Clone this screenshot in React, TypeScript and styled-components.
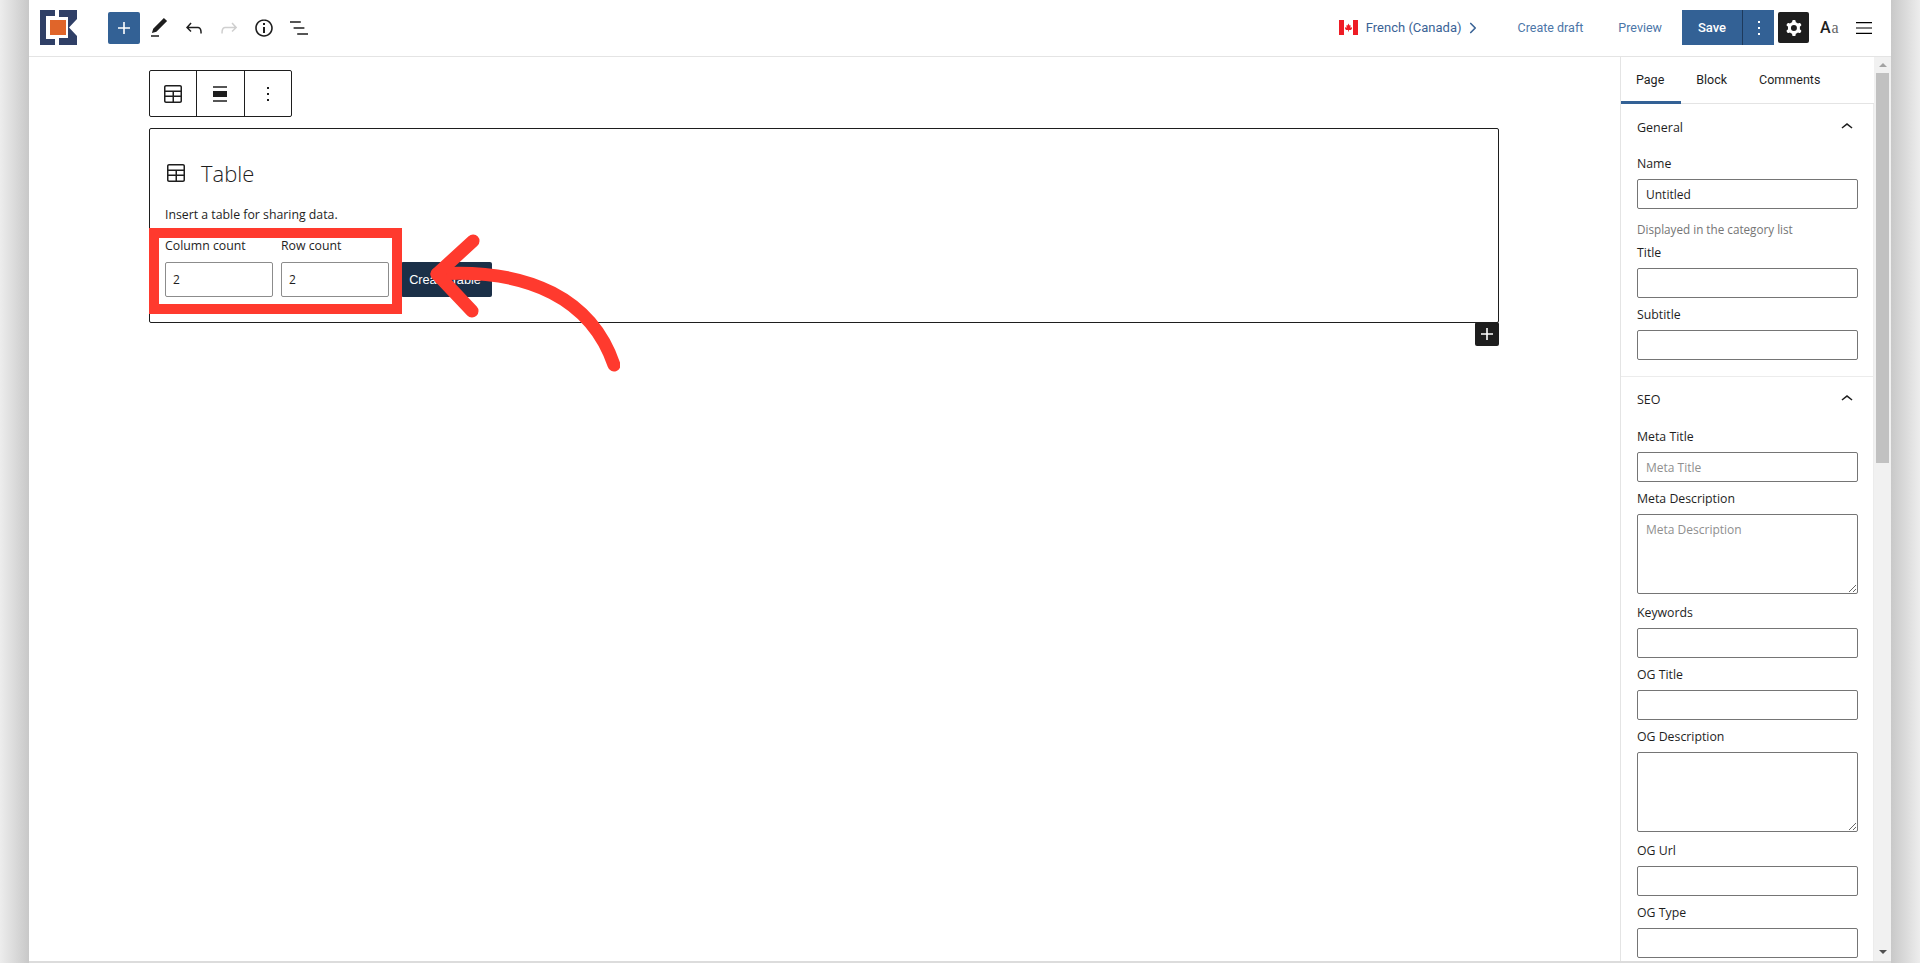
import styled, { createGlobalStyle } from "styled-components";
import { ChevronRight } from "lucide-react";

const GlobalStyle = createGlobalStyle`
  html, body {
    margin: 0;
    padding: 0;
    height: 963px;
    overflow: hidden;
    background: #fff;
  }
  * {
    box-sizing: border-box;
  }
`;

const LABEL_FONT = `"Open Sans", "Noto Sans", sans-serif`;
const UI_FONT = `Roboto, "Liberation Sans", sans-serif`;

const Icon = ({ d, size = 24 }: { d: string; size?: number }) => (
  <svg width={size} height={size} viewBox="0 0 24 24" fill="currentColor" fillRule="evenodd">
    <path d={d} />
  </svg>
);

const PATHS = {
  plus: "M18 11.2h-5.2V6h-1.6v5.2H6v1.6h5.2V18h1.6v-5.2H18z",
  pen: "M20.1 5.1L16.9 2 6.2 12.7l-1.3 4.4 4.5-1.3L20.1 5.1zM4 20.8h8v-1.5H4v1.5z",
  undo: "M18.3 11.7c-.6-.6-1.4-.9-2.3-.9H6.7l2.9-3.3-1.1-1-4.5 5L8.5 16l1-1-2.7-2.7H16c.5 0 .9.2 1.3.5 1 1 1 3.4 1 4.5v.3h1.5v-.2c0-1.5 0-4.3-1.5-5.700z",
  redo: "M15.6 6.5l-1.1 1 2.9 3.3H8c-.9 0-1.7.3-2.3.9-1.4 1.5-1.4 4.2-1.4 5.6v.2h1.5v-.3c0-1.1 0-3.5 1-4.5.3-.3.7-.5 1.3-.5h9.2L14.5 15l1.1 1.1 4.6-4.6-4.6-5z",
  info: "M12 3.2c-4.8 0-8.8 3.9-8.8 8.8 0 4.8 3.9 8.8 8.8 8.8 4.8 0 8.8-3.9 8.8-8.8 0-4.8-4-8.8-8.8-8.8zm0 16c-4 0-7.2-3.3-7.2-7.2C4.8 8 8 4.8 12 4.8s7.2 3.3 7.2 7.2c0 4-3.2 7.2-7.2 7.2zM11 17h2v-6h-2v6zm0-8h2V7h-2v2z",
  list: "M13.8 5.2H3v1.5h10.8V5.2zm-3.6 12v1.5H21v-1.5H10.2zm7.2-6H6.6v1.5h10.8v-1.5z",
  kebab: "M13 19h-2v-2h2v2zm0-6h-2v-2h2v2zm0-6h-2V5h2v2z",
  table:
    "M19 3H5c-1.1 0-2 .9-2 2v14c0 1.1.9 2 2 2h14c1.1 0 2-.9 2-2V5c0-1.1-.9-2-2-2zM5 4.5h14c.3 0 .5.2.5.5v3.5h-15V5c0-.3.2-.5.5-.5zm8 5.5h6.5v3.5H13V10zm-1.5 3.5h-7V10h7v3.5zm-7 5.5v-4h7v4.5H5c-.3 0-.5-.2-.5-.5zm14.5.5h-6V15h6.5v4c0 .3-.2.5-.5.5z",
  align: "M5 15h14V9H5v6zm0 4.8h14v-1.5H5v1.5zM5 4.2v1.5h14V4.2H5z",
  cog: "M10.289 4.836A1 1 0 0111.275 4h1.306a1 1 0 01.987.836l.244 1.466c.787.26 1.503.679 2.108 1.218l1.393-.522a1 1 0 011.216.437l.653 1.13a1 1 0 01-.23 1.273l-1.148.944a6.025 6.025 0 010 2.435l1.149.946a1 1 0 01.23 1.272l-.653 1.13a1 1 0 01-1.216.437l-1.394-.522c-.605.54-1.32.958-2.108 1.218l-.244 1.466a1 1 0 01-.987.836h-1.306a1 1 0 01-.986-.836l-.244-1.466a5.995 5.995 0 01-2.108-1.218l-1.394.522a1 1 0 01-1.217-.436l-.653-1.131a1 1 0 01.23-1.272l1.149-.946a6.026 6.026 0 010-2.435l-1.148-.944a1 1 0 01-.23-1.272l.653-1.131a1 1 0 011.217-.437l1.393.522a5.994 5.994 0 012.108-1.218l.244-1.466zM14.929 12a3 3 0 11-6 0 3 3 0 016 0z",
  menu: "M4 6h16v1.2H4V6zm0 5.400h16v1.200H4v-1.200zM4 16.800h16V18H4v-1.200z",
  up: "M6.5 12.4L12 8l5.5 4.4-.9 1.2L12 10l-4.6 3.6-.9-1.2z",
};

const Logo = () => (
  <svg width="37" height="35" viewBox="0 0 37 35">
    <path d="M0 0H15V6H6V29H15V35H0Z" fill="#2f3f66" />
    <path d="M19 0H37V9L29 17.500L37 26V35H19Z" fill="#2f3f66" />
    <rect x="7" y="7" width="21" height="21" fill="#fff" />
    <rect x="10" y="10" width="16" height="15" fill="#e0652a" />
  </svg>
);

const Flag = () => (
  <svg width="19" height="15" viewBox="0 0 19 15">
    <rect width="19" height="15" fill="#fff" />
    <rect width="5" height="15" fill="#ee1c25" />
    <rect x="14" width="5" height="15" fill="#ee1c25" />
    <path d="M9.500 3.500L10.500 5.500L11.500 5V8L12.800 7L13 8.500L12 10L9.900 10V11.500H9.100V10L7 10L6 8.500L6.200 7L7.500 8V5L8.500 5.500Z" fill="#ee1c25" />
  </svg>
);

const Page = styled.div`
  position: relative;
  width: 1920px;
  height: 963px;
  padding: 0 29px;
  overflow: hidden;
  background: linear-gradient(
    to right,
    #ededed 0,
    #c8c8c8 29px,
    #c8c8c8 1891px,
    #ededed 1920px
  );
`;

const Frame = styled.div`
  display: flex;
  flex-direction: column;
  height: 963px;
  background: #fff;
  border-bottom: 2px solid #dcdcdc;
`;

const TopBar = styled.header`
  display: flex;
  align-items: center;
  justify-content: space-between;
  flex: none;
  height: 57px;
  padding: 0 15px 1px 11px;
  border-bottom: 1px solid #e4e4e4;
`;

const BarGroup = styled.div`
  display: flex;
  align-items: center;
`;

const LogoSlot = styled.div`
  display: flex;
  width: 68px;
`;

const InserterButton = styled.button`
  display: flex;
  align-items: center;
  justify-content: center;
  width: 32px;
  height: 32px;
  margin-right: 1px;
  padding: 0;
  border: none;
  border-radius: 2px;
  background: #336195;
  color: #fff;
`;

const ToolButton = styled.button<{ $muted?: boolean }>`
  display: flex;
  align-items: center;
  justify-content: center;
  width: 35px;
  height: 32px;
  padding: 0;
  border: none;
  background: none;
  color: ${(p) => (p.$muted ? "#cfcfcf" : "#1e1e1e")};
`;

const LanguageLink = styled.a`
  display: flex;
  align-items: center;
  gap: 8px;
  margin-right: 36px;
  font: 400 13px ${UI_FONT};
  color: #3a6396;

  svg:last-child {
    margin-left: -6px;
  }
`;

const BarLink = styled.a`
  margin-right: 35px;
  font: 400 12.5px ${UI_FONT};
  color: #4b76a8;
`;

const PreviewLink = styled(BarLink)`
  margin-right: 20px;
`;

const SaveGroup = styled.div`
  display: flex;
  height: 35px;
  margin-right: 4px;
  background: #336195;
  color: #fff;
`;

const SaveButton = styled.button`
  width: 61px;
  padding: 0;
  border: none;
  border-right: 1px solid #1e3a5c;
  background: none;
  color: inherit;
  font: 500 13px ${UI_FONT};
`;

const SaveMore = styled.button`
  display: flex;
  align-items: center;
  justify-content: center;
  width: 31px;
  padding: 0;
  border: none;
  background: none;
  color: inherit;
`;

const SettingsButton = styled.button`
  display: flex;
  align-items: center;
  justify-content: center;
  width: 31px;
  height: 31px;
  margin-right: 11px;
  padding: 0;
  border: none;
  border-radius: 2px;
  background: #1e1e1e;
  color: #fff;
`;

const FontToggle = styled.span`
  width: 32px;
  font: 400 16px "Liberation Serif", serif;
  color: #666;

  b {
    margin-right: 1px;
    font: 500 16px ${UI_FONT};
    color: #1e1e1e;
  }
`;

const Main = styled.div`
  display: flex;
  flex: 1;
  min-height: 0;
`;

const Canvas = styled.main`
  flex: 1;
  min-width: 0;
  padding: 13px 0 0 120px;
`;

const BlockToolbar = styled.div`
  display: flex;
  width: 143px;
  height: 47px;
  border: 1px solid #1e1e1e;
  border-radius: 2px;
  color: #1e1e1e;
`;

const BlockTool = styled.div`
  display: flex;
  flex: 1;
  align-items: center;
  justify-content: center;

  & + & {
    border-left: 1px solid #1e1e1e;
  }
`;

const TableBlock = styled.section`
  position: relative;
  width: 1350px;
  height: 195px;
  margin-top: 11px;
  padding: 28px 15px 0;
  border: 1px solid #1e1e1e;
  border-radius: 2px;
  color: #1e1e1e;
`;

const BlockHeading = styled.div`
  display: flex;
  align-items: center;
  gap: 13px;
  height: 32px;
  margin-left: -1px;
  font: 300 22px/31px ${LABEL_FONT};
`;

const BlockNote = styled.p`
  margin: 17px 0 0;
  font: 400 12.3px/18px ${LABEL_FONT};
`;

const BlockForm = styled.div`
  display: flex;
  align-items: flex-end;
  margin-top: 13px;
`;

const BlockField = styled.label`
  display: flex;
  flex-direction: column;
  width: 108px;
  margin-right: 8px;
  font: 400 12.3px/18px ${LABEL_FONT};
`;

const CountInput = styled.input`
  width: 108px;
  height: 35px;
  margin-top: 7px;
  padding: 0 7px;
  border: 1px solid #8c8c8c;
  border-radius: 2px;
  font: 400 12px ${LABEL_FONT};
  color: #1e1e1e;
`;

const CreateButton = styled.button`
  width: 91px;
  height: 35px;
  margin-left: 4px;
  padding: 0 3px 0 0;
  border: none;
  border-radius: 2px;
  background: #1b3048;
  color: #fff;
  font: 400 12.7px "Liberation Sans", sans-serif;
`;

const AppenderButton = styled.button`
  position: absolute;
  right: -1px;
  bottom: -24px;
  display: flex;
  align-items: center;
  justify-content: center;
  width: 24px;
  height: 24px;
  padding: 0;
  border: none;
  border-radius: 2px;
  background: #1e1e1e;
  color: #fff;
`;

const Sidebar = styled.aside`
  display: flex;
  flex: none;
  width: 271px;
  border-left: 1px solid #e4e4e4;
`;

const SidebarBody = styled.div`
  flex: 1;
  min-width: 0;
  overflow: hidden;
`;

const Tabs = styled.div`
  display: flex;
  height: 47px;
  border-bottom: 1px solid #e4e4e4;
`;

const Tab = styled.div<{ $active?: boolean }>`
  display: flex;
  align-items: center;
  height: 47px;
  padding: 0 17px 0 15px;
  border-bottom: 3px solid ${(p) => (p.$active ? "#336195" : "transparent")};
  font: 400 12.5px ${UI_FONT};
  color: #1e1e1e;
`;

const Section = styled.section`
  width: 253px;
  padding: 0 16px 16px;
  border: 1px solid #ececec;
  border-width: 0 1px 1px 0;
`;

const SectionHead = styled.div<{ $first?: boolean }>`
  display: flex;
  align-items: center;
  justify-content: space-between;
  height: ${(p) => (p.$first ? "46px" : "44px")};
  margin: 0 -2px ${(p) => (p.$first ? "-3px" : "-1px")} 0;
  font: 400 12.5px ${LABEL_FONT};
  color: #1e1e1e;
`;

const Field = styled.label`
  display: flow-root;
  margin-top: 8px;
  font: 400 12.3px/18px ${LABEL_FONT};
  color: #1e1e1e;
`;

const TextInput = styled.input`
  display: block;
  width: 221px;
  height: 30px;
  margin-top: 6px;
  padding: 0 8px;
  border: 1px solid #757575;
  border-radius: 2px;
  background: #fff;
  font: 400 12px ${LABEL_FONT};
  color: #1e1e1e;

  &::placeholder {
    color: #8f8f8f;
  }
`;

const TextArea = styled.textarea`
  display: block;
  width: 221px;
  height: 80px;
  margin: 6px 0 2px;
  padding: 6px 8px;
  border: 1px solid #757575;
  border-radius: 2px;
  background: #fff;
  font: 400 12px/18px ${LABEL_FONT};

  &::placeholder {
    color: #8f8f8f;
  }
`;

const HelpText = styled.p`
  margin: 11px 0 -2px;
  font: 400 11.7px/18px ${LABEL_FONT};
  color: #757575;
`;

const Scrollbar = styled.div`
  display: flex;
  flex: none;
  flex-direction: column;
  align-items: center;
  justify-content: space-between;
  width: 17px;
  padding-bottom: 7px;
  background: #f1f1f1;
`;

const ScrollTrack = styled.div`
  display: flex;
  flex-direction: column;
  width: 100%;
  align-items: center;
`;

const ScrollUp = styled.span`
  width: 0;
  height: 0;
  margin: 6px 0;
  border: 4px solid transparent;
  border-top: 0;
  border-bottom: 4px solid #a3a3a3;
`;

const ScrollThumb = styled.div`
  width: 13px;
  height: 390px;
  background: #c1c1c1;
`;

const ScrollDown = styled.span`
  width: 0;
  height: 0;
  border: 4px solid transparent;
  border-bottom: 0;
  border-top: 4px solid #505050;
`;

const RedBox = styled.div`
  position: absolute;
  left: 149px;
  top: 228px;
  width: 253px;
  height: 86px;
  border: 10px solid #ff3a2e;
`;

const Arrow = styled.svg`
  position: absolute;
  left: 420px;
  top: 230px;
`;

const fields = ["Keywords", "OG Title"];

export default function App() {
  return (
    <Page>
      <GlobalStyle />
      <Frame>
        <TopBar>
          <BarGroup>
            <LogoSlot>
              <Logo />
            </LogoSlot>
            <InserterButton>
              <Icon d={PATHS.plus} />
            </InserterButton>
            <ToolButton>
              <Icon d={PATHS.pen} />
            </ToolButton>
            <ToolButton>
              <Icon d={PATHS.undo} />
            </ToolButton>
            <ToolButton $muted>
              <Icon d={PATHS.redo} />
            </ToolButton>
            <ToolButton>
              <Icon d={PATHS.info} />
            </ToolButton>
            <ToolButton>
              <Icon d={PATHS.list} />
            </ToolButton>
          </BarGroup>
          <BarGroup>
            <LanguageLink>
              <Flag />
              French (Canada)
              <ChevronRight size={18} strokeWidth={2.2} />
            </LanguageLink>
            <BarLink>Create draft</BarLink>
            <PreviewLink>Preview</PreviewLink>
            <SaveGroup>
              <SaveButton>Save</SaveButton>
              <SaveMore>
                <Icon d={PATHS.kebab} />
              </SaveMore>
            </SaveGroup>
            <SettingsButton>
              <Icon d={PATHS.cog} />
            </SettingsButton>
            <FontToggle>
              <b>A</b>a
            </FontToggle>
            <Icon d={PATHS.menu} />
          </BarGroup>
        </TopBar>
        <Main>
          <Canvas>
            <BlockToolbar>
              <BlockTool>
                <Icon d={PATHS.table} />
              </BlockTool>
              <BlockTool>
                <Icon d={PATHS.align} />
              </BlockTool>
              <BlockTool>
                <Icon d={PATHS.kebab} />
              </BlockTool>
            </BlockToolbar>
            <TableBlock>
              <BlockHeading>
                <Icon d={PATHS.table} />
                Table
              </BlockHeading>
              <BlockNote>Insert a table for sharing data.</BlockNote>
              <BlockForm>
                <BlockField>
                  Column count
                  <CountInput readOnly value="2" />
                </BlockField>
                <BlockField>
                  Row count
                  <CountInput readOnly value="2" />
                </BlockField>
                <CreateButton>Create Table</CreateButton>
              </BlockForm>
              <AppenderButton>
                <Icon d={PATHS.plus} />
              </AppenderButton>
            </TableBlock>
          </Canvas>
          <Sidebar>
            <SidebarBody>
              <Tabs>
                <Tab $active>Page</Tab>
                <Tab>Block</Tab>
                <Tab>Comments</Tab>
              </Tabs>
              <Section>
                <SectionHead $first>
                  General
                  <Icon d={PATHS.up} />
                </SectionHead>
                <Field>
                  Name
                  <TextInput readOnly value="Untitled" />
                </Field>
                <HelpText>Displayed in the category list</HelpText>
                <Field>
                  Title
                  <TextInput readOnly />
                </Field>
                <Field>
                  Subtitle
                  <TextInput readOnly />
                </Field>
              </Section>
              <Section>
                <SectionHead>
                  SEO
                  <Icon d={PATHS.up} />
                </SectionHead>
                <Field>
                  Meta Title
                  <TextInput readOnly placeholder="Meta Title" />
                </Field>
                <Field>
                  Meta Description
                  <TextArea readOnly placeholder="Meta Description" />
                </Field>
                {fields.map((name) => (
                  <Field key={name}>
                    {name}
                    <TextInput readOnly />
                  </Field>
                ))}
                <Field>
                  OG Description
                  <TextArea readOnly />
                </Field>
                <Field>
                  OG Url
                  <TextInput readOnly />
                </Field>
                <Field>
                  OG Type
                  <TextInput readOnly />
                </Field>
              </Section>
            </SidebarBody>
            <Scrollbar>
              <ScrollTrack>
                <ScrollUp />
                <ScrollThumb />
              </ScrollTrack>
              <ScrollDown />
            </Scrollbar>
          </Sidebar>
        </Main>
      </Frame>
      <RedBox />
      <Arrow width="200" height="145" viewBox="0 0 200 145" fill="none" stroke="#ff3a2e" strokeWidth="13" strokeLinecap="round" strokeLinejoin="round">
        <path d="M194 135C172 70 110 38 17 44" />
        <path d="M53 11L17 44L52 81" />
      </Arrow>
    </Page>
  );
}
